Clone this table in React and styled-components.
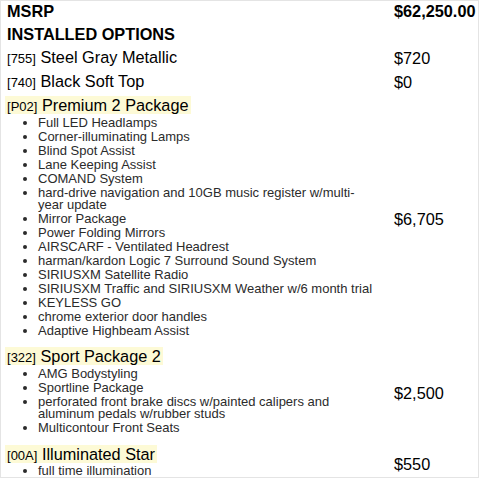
import React from 'react'
import styled, { createGlobalStyle } from 'styled-components'

const options = [
  { code: '755', name: 'Steel Gray Metallic', price: '$720' },
  { code: '740', name: 'Black Soft Top', price: '$0' },
  {
    code: 'P02',
    name: 'Premium 2 Package',
    price: '$6,705',
    highlight: true,
    items: [
      'Full LED Headlamps',
      'Corner-illuminating Lamps',
      'Blind Spot Assist',
      'Lane Keeping Assist',
      'COMAND System',
      'hard-drive navigation and 10GB music register w/multi-year update',
      'Mirror Package',
      'Power Folding Mirrors',
      'AIRSCARF - Ventilated Headrest',
      'harman/kardon Logic 7 Surround Sound System',
      'SIRIUSXM Satellite Radio',
      'SIRIUSXM Traffic and SIRIUSXM Weather w/6 month trial',
      'KEYLESS GO',
      'chrome exterior door handles',
      'Adaptive Highbeam Assist',
    ],
  },
  {
    code: '322',
    name: 'Sport Package 2',
    price: '$2,500',
    highlight: true,
    items: [
      'AMG Bodystyling',
      'Sportline Package',
      'perforated front brake discs w/painted calipers and aluminum pedals w/rubber studs',
      'Multicontour Front Seats',
    ],
  },
  {
    code: '00A',
    name: 'Illuminated Star',
    price: '$550',
    highlight: true,
    items: ['full time illumination'],
  },
]

function App() {
  return (
    <>
      <GlobalStyle />
      <Sheet>
        <Row>
          <Title>MSRP</Title>
          <Price bold>$62,250.00</Price>
        </Row>
        <Row>
          <Title>INSTALLED OPTIONS</Title>
          <Price />
        </Row>
        {options.map((opt) => (
          <Row key={opt.code}>
            <Option hasItems={!!opt.items}>
              <OptionLine>
                <OptionName highlight={opt.highlight}>
                  <Code>[{opt.code}]</Code> {opt.name}
                </OptionName>
              </OptionLine>
              {opt.items && (
                <Items>
                  {opt.items.map((item) => (
                    <Item key={item}>{item}</Item>
                  ))}
                </Items>
              )}
            </Option>
            <Price>{opt.price}</Price>
          </Row>
        ))}
      </Sheet>
    </>
  )
}

export default App

const GlobalStyle = createGlobalStyle`
  body {
    margin: 0;
    background: #fff;
    font-family: 'Liberation Sans', Arial, sans-serif;
    color: #000;
  }
`
const Sheet = styled.div`
  box-sizing: border-box;
  width: 479px;
  height: 478px;
  box-shadow: inset 0 0 0 1px #e4e4e4;
  padding: 0 0 0 7px;
  overflow: hidden;
`
const Row = styled.div`
  display: grid;
  grid-template-columns: 387px 1fr;
  align-items: center;
`
const Title = styled.div`
  font-size: 16.3px;
  font-weight: bold;
  line-height: 23px;
`
const Option = styled.div`
  padding-right: 18px;
  padding-bottom: ${(p) => (p.hasItems ? '7px' : '0')};
`
const OptionLine = styled.div`
  font-size: 16.3px;
  line-height: 23px;
`
const OptionName = styled.span`
  margin-left: -2px;
  padding: 0 2px;
  background: ${(p) => (p.highlight ? '#fdfad6' : 'transparent')};
`
const Code = styled.span`
  font-size: 13px;
`
const Items = styled.ul`
  margin: -2px 0 0;
  padding: 0 0 0 31px;
  font-size: 13px;
  line-height: 12.6px;
  color: #2b2b2b;
`
const Item = styled.li`
  padding: 0.7px 0;
`
const Price = styled.div`
  font-size: 16.3px;
  line-height: 23px;
  font-weight: ${(p) => (p.bold ? 'bold' : 'normal')};
`
